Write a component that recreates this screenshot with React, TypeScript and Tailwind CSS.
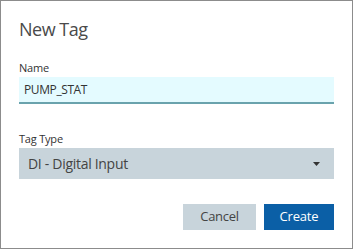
import React from "react";

const App: React.FC = () => {
  return (
    <div
      className="w-[353px] h-[249px] bg-white border border-[#8c8c8c] text-[#444] flex flex-col px-[18px]"
      style={{ fontFamily: '"Open Sans", "Noto Sans", sans-serif' }}
    >
      <h2 className="text-[18px] leading-[26px] tracking-[-0.5px] mt-[15px] text-[#4a4a4a]">New Tag</h2>

      <label className="text-[11px] leading-[14px] tracking-[-0.2px] mt-[19px] text-[#333]">Name</label>
      <div className="mt-[2px] h-[27px] bg-[#e4fbff] border-b-2 border-[#6aa3ad] flex items-center px-[5px] text-[12px] tracking-[-0.4px] text-[#333]">
        PUMP_STAT
      </div>

      <label className="text-[11px] leading-[14px] tracking-[-0.2px] mt-[28px] text-[#333]">Tag Type</label>
      <div className="mt-[2px] h-[31px] bg-[#c8d4db] flex items-center justify-between pl-[9px] pr-[14px] text-[14px] tracking-[-0.3px] text-[#444]">
        <span>DI - Digital Input</span>
        <svg width="7" height="4" viewBox="0 0 7 4">
          <path d="M0 0h7L3.5 4z" fill="#333" />
        </svg>
      </div>

      <div className="flex justify-end gap-[8px] mt-[25px]">
        <button className="w-[73px] h-[26px] bg-[#c8d4db] text-[13px] tracking-[-0.3px] text-[#444]">Cancel</button>
        <button className="w-[70px] h-[26px] bg-[#0b5fa6] text-[13px] tracking-[-0.2px] text-white">Create</button>
      </div>
    </div>
  );
};

export default App;
